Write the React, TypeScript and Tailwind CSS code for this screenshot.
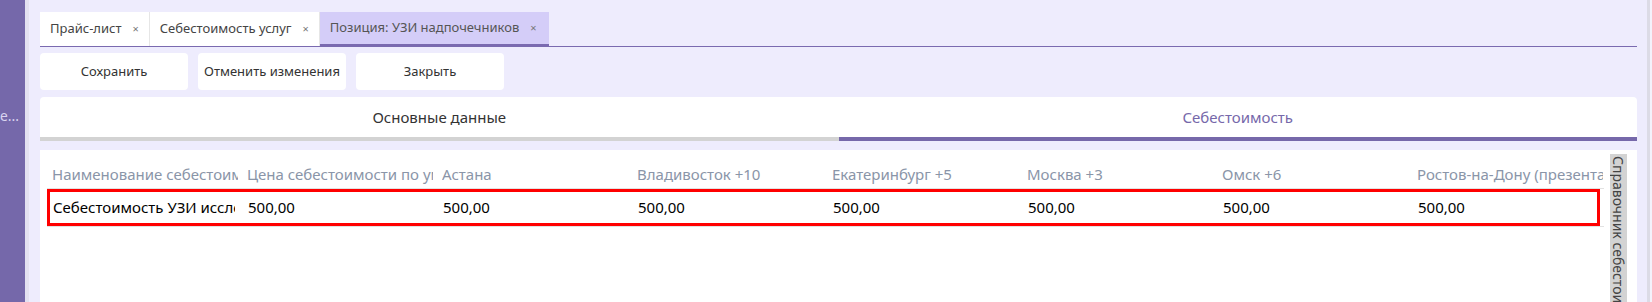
import React from 'react';

const tabs = [
  { label: 'Прайс-лист', active: false },
  { label: 'Себестоимость услуг', active: false },
  { label: 'Позиция: УЗИ надпочечников', active: true },
];

const columns = [
  'Наименование себестоимости',
  'Цена себестоимости по умолчанию',
  'Астана',
  'Владивосток +10',
  'Екатеринбург +5',
  'Москва +3',
  'Омск +6',
  'Ростов-на-Дону (презентация)',
];

const row = [
  'Себестоимость УЗИ исследования',
  '500,00',
  '500,00',
  '500,00',
  '500,00',
  '500,00',
  '500,00',
  '500,00',
];

export default function App() {
  return (
    <div className="flex h-[302px] w-[1652px] overflow-hidden bg-[#eeecfd] font-['Noto_Sans',sans-serif]">
      {/* Sidebar */}
      <aside className="flex w-[25px] shrink-0 flex-col bg-[#7568aa] pt-[106px]">
        <div className="overflow-hidden whitespace-nowrap pr-[6px] text-right text-[14px] leading-[20px] text-[#d9d4f0]">
          е...
        </div>
      </aside>
      <div className="w-[4px] shrink-0 bg-[#e3e1f1]" />

      {/* Main */}
      <main className="flex min-w-0 flex-1 flex-col pl-[11px] pr-[10px] pt-[12px]">
        {/* Document tabs */}
        <div className="flex h-[35px] shrink-0 border-b border-[#7a6ab0]">
          {tabs.map((t) => (
            <div
              key={t.label}
              className={
                t.active
                  ? 'flex h-[35px] items-center gap-[11px] border-b-[3px] border-[#7a6ab0] bg-[#d4cdf8] pl-[10px] pr-[12px] text-[13px] text-[#555]'
                  : 'flex h-[34px] items-center gap-[11px] border-r border-[#e6e6e6] bg-white pl-[10px] pr-[10px] text-[13px] text-[#444]'
              }
            >
              <span className="whitespace-nowrap">{t.label}</span>
              <span className="text-[11px] text-[#777]">×</span>
            </div>
          ))}
        </div>

        {/* Action buttons */}
        <div className="mt-[6px] flex shrink-0 gap-[10px]">
          {['Сохранить', 'Отменить изменения', 'Закрыть'].map((b) => (
            <button
              key={b}
              className="flex h-[37px] w-[148px] items-center justify-center rounded-[4px] bg-white text-[13px] text-[#333]"
            >
              {b}
            </button>
          ))}
        </div>

        {/* Section tabs */}
        <div className="mt-[7px] flex h-[44px] shrink-0 overflow-hidden rounded-t-[4px] bg-white">
          <div className="flex h-[44px] flex-1 items-center justify-center border-b-[4px] border-[#d3d3d3] text-[15px] text-[#333]">
            Основные данные
          </div>
          <div className="flex h-[44px] flex-1 items-center justify-center border-b-[4px] border-[#7668aa] text-[15px] text-[#7668aa]">
            Себестоимость
          </div>
        </div>

        {/* Content card */}
        <div className="mt-[9px] flex min-h-0 flex-1 bg-white pl-[7px] pr-[10px] pt-[4px]">
          <div className="w-[1557px] shrink-0 overflow-hidden">
            <div className="flex h-[35px] w-[1557px] items-center border-b border-[#e2e2e2] pt-[7px]">
              {columns.map((c) => (
                <div key={c} className="w-[195px] shrink-0 pl-[5px] pr-[4px]">
                  <div className="overflow-hidden whitespace-nowrap text-[15px] text-[#8a95a8]">{c}</div>
                </div>
              ))}
            </div>
            <div className="w-[1557px] border-b border-[#e2e2e2]">
              <div className="flex h-[37px] w-[1553px] items-center border-[3px] border-[#ff0000]">
                {row.map((v, i) => (
                  <div key={i} className="w-[195px] shrink-0 pl-[3px] pr-[10px]">
                    <div className="overflow-hidden whitespace-nowrap text-[15px] text-black">{v}</div>
                  </div>
                ))}
              </div>
            </div>
          </div>
          <div className="ml-[6px] w-[17px] shrink-0 overflow-hidden bg-[#d3d3d3]">
            <div className="whitespace-nowrap pt-[2px] text-[14px] leading-[17px] text-[#444] [writing-mode:vertical-rl]">
              Справочник себестоимости
            </div>
          </div>
        </div>
      </main>

      <div className="w-[3px] shrink-0 bg-[#dcdbe6]" />
      <div className="w-[2px] shrink-0 bg-[#f3f2fb]" />
    </div>
  );
}
